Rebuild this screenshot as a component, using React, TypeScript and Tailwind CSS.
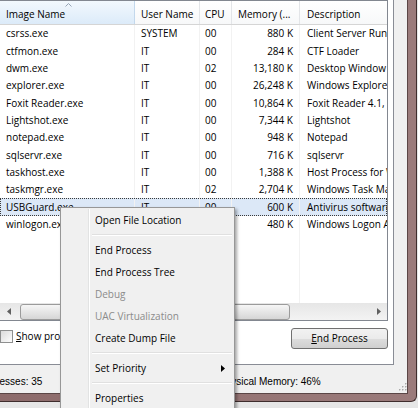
import React from 'react';

const cols = [
  { w: 'w-[135px]', pl: 'pl-[6px]' },
  { w: 'w-[65px]', pl: 'pl-[6px]' },
  { w: 'w-[32px]', pl: 'pl-[5px]' },
  { w: 'w-[68px]', pl: 'pl-[6px]' },
  { w: 'w-[87px]', pl: 'pl-[7px]' },
];

const rows = [
  ['csrss.exe', 'SYSTEM', '00', '880 K', 'Client Server Runtime Process'],
  ['ctfmon.exe', 'IT', '00', '284 K', 'CTF Loader'],
  ['dwm.exe', 'IT', '02', '13,180 K', 'Desktop Window Manager'],
  ['explorer.exe', 'IT', '00', '26,248 K', 'Windows Explorer'],
  ['Foxit Reader.exe', 'IT', '00', '10,864 K', 'Foxit Reader 4.1, Best Reader'],
  ['Lightshot.exe', 'IT', '00', '7,344 K', 'Lightshot'],
  ['notepad.exe', 'IT', '00', '948 K', 'Notepad'],
  ['sqlservr.exe', 'IT', '00', '716 K', 'sqlservr'],
  ['taskhost.exe', 'IT', '00', '1,388 K', 'Host Process for Windows Tasks'],
  ['taskmgr.exe', 'IT', '02', '2,704 K', 'Windows Task Manager'],
  ['USBGuard.exe', 'IT', '00', '600 K', 'Antivirus software'],
  ['winlogon.exe', 'IT', '00', '480 K', 'Windows Logon Application'],
];

type MenuEntry = { label?: string; disabled?: boolean; sub?: boolean; sep?: boolean };

const menu: MenuEntry[] = [
  { label: 'Open File Location' },
  { sep: true },
  { label: 'End Process' },
  { label: 'End Process Tree' },
  { label: 'Debug', disabled: true },
  { label: 'UAC Virtualization', disabled: true },
  { label: 'Create Dump File' },
  { sep: true },
  { label: 'Set Priority', sub: true },
  { sep: true },
  { label: 'Properties' },
];

const Gutter: React.FC = () => (
  <>
    <div className="w-[26px] shrink-0" />
    <div className="w-[2px] shrink-0 self-stretch border-l border-[#e2e3e3] border-r border-r-white" />
  </>
);

const ContextMenu: React.FC = () => (
  <div className="absolute left-[60px] top-[207px] w-[175px] bg-[#f0f0f0] border border-[#979797] p-[1px] shadow-[2px_2px_3px_rgba(0,0,0,0.35)]">
    {menu.map((m, i) =>
      m.sep ? (
        <div key={i} className="h-[8px] flex">
          <Gutter />
          <div className="flex-1 flex items-center pl-[2px] pr-[1px]">
            <div className="w-full h-[2px] border-t border-[#e0e0e0] border-b border-b-white" />
          </div>
        </div>
      ) : (
        <div key={i} className="h-[22px] flex items-center">
          <Gutter />
          <span className={`flex-1 pl-[5px] text-[10px] ${m.disabled ? 'text-[#8b8b8b]' : 'text-black'}`}>{m.label}</span>
          {m.sub && (
            <svg width="4" height="7" viewBox="0 0 4 7" className="mr-[8px]">
              <path d="M0 0 L4 3.5 L0 7 Z" fill="#000" />
            </svg>
          )}
        </div>
      )
    )}
  </div>
);

const ListView: React.FC = () => (
  <div className="w-[388px] h-[321px] border-t border-r border-b border-[#828790] flex flex-col bg-white overflow-hidden">
    <div className="h-[24px] flex border-b border-[#d5d5d5] bg-[linear-gradient(#ffffff,#f7f8f9)] shrink-0">
      <div className="relative w-[135px] flex items-center pt-[3px] pl-[6px] bg-[linear-gradient(#f2f8fd,#dcebf9)] border-r border-[#c3d8ec]">
        <svg width="7" height="4" viewBox="0 0 7 4" className="absolute left-[65px] top-[2px]">
          <path d="M0.5 3.5 L3.5 0.5 L6.5 3.5" stroke="#97a5b6" fill="none" />
        </svg>
        Image Name
      </div>
      <div className="w-[65px] flex items-center pt-[3px] pl-[6px] border-r border-[#e3e5e8]">User Name</div>
      <div className="w-[32px] flex items-center pt-[3px] pl-[5px] border-r border-[#e3e5e8]">CPU</div>
      <div className="w-[68px] flex items-center pt-[3px] pl-[6px] border-r border-[#e3e5e8] whitespace-nowrap">Memory (...</div>
      <div className="w-[87px] flex items-center pt-[3px] pl-[7px] whitespace-nowrap overflow-hidden">Description</div>
    </div>
    {rows.map((r, i) => {
      const sel = r[0] === 'USBGuard.exe';
      return (
        <div
          key={i}
          className={`h-[17.35px] flex shrink-0 ${sel ? 'bg-[#dce8f7] outline outline-1 outline-dotted outline-[#3a3a3a] -outline-offset-1' : ''}`}
        >
          {r.map((c, j) => (
            <div
              key={j}
              className={`${cols[j].w} ${j === 3 ? 'pr-[6px] text-right' : cols[j].pl} flex items-center whitespace-nowrap overflow-hidden ${j === 3 ? 'justify-end' : ''} ${j < 4 ? 'border-r border-[#f2f2f2]' : ''}`}
            >
              {c}
            </div>
          ))}
        </div>
      );
    })}
    <div className="flex-1 flex">
      {cols.map((c, j) => (
        <div key={j} className={`${c.w} ${j < 4 ? 'border-r border-[#f2f2f2]' : ''}`} />
      ))}
    </div>
    <div className="h-[17px] flex shrink-0 bg-[linear-gradient(#e6e6e6,#f3f3f3)]">
      <div className="w-[17px] flex items-center justify-center">
        <svg width="4" height="7" viewBox="0 0 4 7">
          <path d="M4 0 L0 3.5 L4 7 Z" fill="#606060" />
        </svg>
      </div>
      <div className="flex-1 flex items-center pl-[3px]">
        <div className="w-[270px] h-[16px] rounded-[3px] border border-[#9b9b9b] bg-[linear-gradient(#f6f6f6,#e6e6e6_50%,#d6d6d6)]" />
      </div>
      <div className="w-[17px] flex items-center justify-center">
        <svg width="4" height="7" viewBox="0 0 4 7">
          <path d="M0 0 L4 3.5 L0 7 Z" fill="#606060" />
        </svg>
      </div>
    </div>
  </div>
);

const Grip: React.FC = () => (
  <svg width="8" height="8" viewBox="0 0 8 8">
    {[[6, 0], [3, 3], [6, 3], [0, 6], [3, 6], [6, 6]].map(([x, y], i) => (
      <g key={i}>
        <rect x={x + 1} y={y + 1} width="1" height="1" fill="#ffffff" />
        <rect x={x} y={y} width="1.5" height="1.5" fill="#a9a9a9" />
      </g>
    ))}
  </svg>
);

export default function App() {
  return (
    <div className="relative w-[418px] h-[408px] bg-[#e6e6e6] overflow-hidden font-['Open_Sans',sans-serif] text-[10px] text-black">
      <div className="w-[417px] h-[402px] bg-[linear-gradient(90deg,#8d6b6b,#9b7b7b)] border-r border-b border-[#3f2d2d] pr-[8px] pb-[7px] rounded-br-[6px]">
        <div className="w-[408px] h-[394px] bg-[#f0f0f0] border-r border-b border-[#5b4646] flex flex-col">
          <div className="h-[365px] flex shrink-0">
            <div className="w-[394px] h-full bg-white border-r border-b border-[#898c95] flex flex-col">
              <ListView />
              <div className="w-[388px] flex justify-between items-start pt-[7px]">
                <div className="flex items-center gap-[3px] mt-[1px]">
                  <div className="w-[13px] h-[13px] border border-[#8e8f8f] bg-[linear-gradient(135deg,#dcdcdc,#fdfdfd)] p-[2px]">
                    <div className="w-full h-full bg-[linear-gradient(135deg,#e0e0e0,#f8f8f8)]" />
                  </div>
                  <span className="whitespace-nowrap">
                    <span className="underline">S</span>how processes from all users
                  </span>
                </div>
                <button className="w-[97px] h-[21px] rounded-[3px] border border-[#707070] bg-[linear-gradient(#f2f2f2,#ebebeb_50%,#dddddd_51%,#cfcfcf)] flex items-center justify-center text-[10px]">
                  <span className="underline">E</span>nd Process
                </button>
              </div>
            </div>
          </div>
          <div className="flex-1 flex items-end pb-[3px] pr-[0px] font-['Liberation_Sans',Arial,sans-serif] text-[10px]">
            <div className="ml-[-21px] w-[116px] whitespace-nowrap pb-[1px]">Processes: 35</div>
            <div className="w-[124px] whitespace-nowrap pb-[1px]">CPU Usage: 2%</div>
            <div className="flex-1 whitespace-nowrap pb-[1px]">Physical Memory: 46%</div>
            <div className="mr-[0px] mb-[-1px]">
              <Grip />
            </div>
          </div>
        </div>
      </div>
      <ContextMenu />
    </div>
  );
}
